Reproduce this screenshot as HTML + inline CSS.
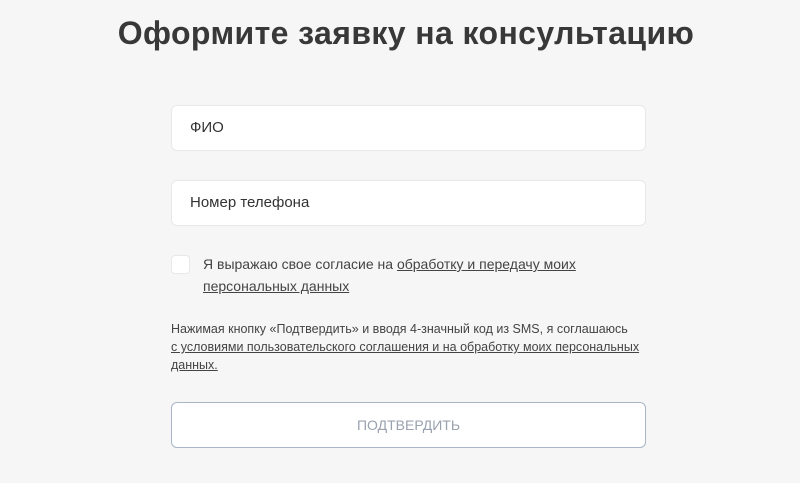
<!DOCTYPE html>
<html><head><meta charset="utf-8"><style>
body{margin:0;width:800px;height:483px;background:#f6f6f6;font-family:"Liberation Sans",sans-serif;color:#333;position:relative;overflow:hidden}
h1{position:absolute;top:11px;left:6px;width:800px;text-align:center;margin:0;font-size:32px;font-weight:bold;color:#383838;letter-spacing:0.4px;line-height:44px}
.in{position:absolute;left:171px;width:473px;height:44px;background:#fff;border:1px solid #e8e8e8;border-radius:6px;font-size:15px;line-height:44px;text-indent:18px;color:#333}
.cb{position:absolute;left:171px;top:255px;width:17px;height:17px;background:#fff;border:1px solid #e8e8e8;border-radius:4px}
.t1{position:absolute;left:203px;top:253px;font-size:14px;line-height:22px;color:#444;width:390px}
.t2{position:absolute;left:171px;top:320px;font-size:12.5px;line-height:18px;color:#444;width:470px}
u{text-decoration:underline}
.btn{position:absolute;left:171px;top:402px;width:473px;height:44px;background:#fff;border:1px solid #a9b5c6;border-radius:6px;text-align:center;line-height:44px;font-size:14px;color:#9aa2ae}
</style></head><body>
<h1>Оформите заявку на консультацию</h1>
<div class="in" style="top:105px">ФИО</div>
<div class="in" style="top:180px">Номер телефона</div>
<div class="cb"></div>
<div class="t1">Я выражаю свое согласие на <u>обработку и передачу моих</u><br><u>персональных данных</u></div>
<div class="t2">Нажимая кнопку «Подтвердить» и вводя 4-значный код из SMS, я соглашаюсь<br><u>с условиями пользовательского соглашения и на обработку моих персональных</u><br><u>данных.</u></div>
<div class="btn">ПОДТВЕРДИТЬ</div>
</body></html>
